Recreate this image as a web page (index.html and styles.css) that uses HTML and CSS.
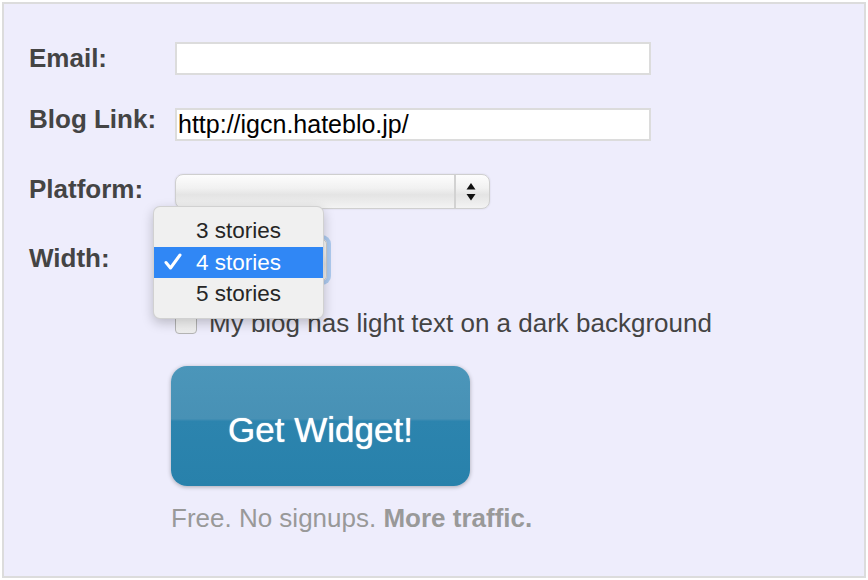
FILE: index.html
```html
<!DOCTYPE html>
<html lang="en">
<head>
    <meta charset="UTF-8">
    <title>Get Widget</title>
    <link rel="stylesheet" href="styles.css">
</head>
<body>
    <div class="panel">
        <form class="widget-form">
            <div class="row">
                <label class="field-label label-email" for="email">Email:</label>
                <input type="text" id="email" class="text-input">
            </div>

            <div class="row">
                <label class="field-label label-blog" for="blog">Blog Link:</label>
                <input type="text" id="blog" class="text-input" value="http://igcn.hateblo.jp/">
            </div>

            <div class="row">
                <label class="field-label label-platform">Platform:</label>
                <div class="select select-platform">
                    <span class="select-value"></span>
                    <span class="select-arrows">
                        <svg width="10" height="20" viewBox="0 0 10 20">
                            <polygon points="5,1 9.5,7.5 0.5,7.5" fill="#111"/>
                            <polygon points="0.5,12 9.5,12 5,18.5" fill="#111"/>
                        </svg>
                    </span>
                </div>
            </div>

            <div class="row row-width">
                <label class="field-label label-width">Width:</label>
                <div class="width-wrap">
                    <div class="select select-width"></div>
                    <ul class="menu">
                        <li class="menu-item">3 stories</li>
                        <li class="menu-item selected">
                            <svg class="tick" width="18" height="18" viewBox="0 0 18 18">
                                <polyline points="2,9.5 6.5,15 16,2" fill="none" stroke="#fff" stroke-width="3" stroke-linecap="round" stroke-linejoin="round"/>
                            </svg>
                            4 stories
                        </li>
                        <li class="menu-item">5 stories</li>
                    </ul>
                </div>
            </div>

            <div class="row row-check">
                <span class="checkbox"></span>
                <span class="check-label">My blog has light text on a dark background</span>
            </div>

            <button type="button" class="get-widget">Get Widget!</button>

            <p class="caption">Free. No signups. <b>More traffic.</b></p>
        </form>
    </div>
</body>
</html>
```

FILE: styles.css
```css
body {
    margin: 0;
    background-color: #fff;
    font-family: "Liberation Sans", Arial, sans-serif;
}

.panel {
    margin: 2px;
    width: 860px;
    height: 572px;
    border: 2px solid #dcdcdc;
    background-color: #eeedfc;
}

.widget-form {
    padding: 38px 0 0 25px;
}

.row {
    display: flex;
    align-items: flex-start;
    margin-bottom: 33px;
}

.field-label {
    width: 146px;
    flex-shrink: 0;
    font-size: 26px;
    line-height: 26px;
    font-weight: bold;
    color: #444;
}

.label-email { padding-top: 3px; }
.label-blog { margin-top: -2px; }
.label-platform { padding-top: 2px; }
.label-width { padding-top: 6px; }

.text-input {
    width: 476px;
    height: 33px;
    box-sizing: border-box;
    margin: 0;
    padding: 0 1px;
    border: 2px solid #dcdcdc;
    background-color: #fff;
    font-family: "Liberation Sans", Arial, sans-serif;
    font-size: 25px;
    color: #000;
    outline: none;
}

.select {
    box-sizing: border-box;
    border: 1px solid #cfcfcf;
    border-radius: 8px;
    background: linear-gradient(to bottom, #fdfdfd 0%, #f1f1f1 40%, #e4e4e4 60%, #f3f3f3 100%);
    box-shadow: 0 0 2px rgba(0, 0, 0, 0.12);
}

.select-platform {
    display: flex;
    width: 315px;
    height: 35px;
}

.select-value {
    flex: 1;
    border-right: 2px solid #d2d2d2;
}

.select-arrows {
    width: 33px;
    display: flex;
    align-items: center;
    justify-content: center;
}

.select-arrows svg {
    margin-right: 4px;
}

.row-width {
    margin-top: -3px;
    margin-bottom: 29px;
}

.width-wrap {
    position: relative;
}

.select-width {
    width: 152px;
    height: 42px;
    border-radius: 5px;
    box-shadow: 0 0 0 4px #aecbf0;
}

.menu {
    position: absolute;
    top: -33px;
    left: -22px;
    width: 171px;
    box-sizing: border-box;
    margin: 0;
    padding: 8px 0;
    list-style: none;
    background-color: #f0f0f0;
    border: 1px solid rgba(0, 0, 0, 0.13);
    border-radius: 7px;
    box-shadow: 0 4px 12px rgba(0, 0, 0, 0.22);
}

.menu-item {
    position: relative;
    height: 32px;
    padding-left: 42px;
    font-size: 22.5px;
    line-height: 32px;
    color: #262626;
}

.menu-item.selected {
    height: 31px;
    line-height: 31px;
    background-color: #3087f5;
    color: #fff;
}

.tick {
    position: absolute;
    left: 10px;
    top: 6px;
}

.row-check {
    align-items: center;
    margin-left: 146px;
    margin-bottom: 30px;
}

.checkbox {
    width: 22px;
    height: 22px;
    box-sizing: border-box;
    border: 1px solid #b4b4b4;
    border-radius: 4px;
    background: linear-gradient(to bottom, #fff, #ececec);
}

.check-label {
    margin-left: 12px;
    font-size: 26px;
    line-height: 26px;
    color: #444;
}

.get-widget {
    display: block;
    margin-left: 142px;
    width: 299px;
    height: 120px;
    padding: 7px 0 0;
    border: none;
    border-radius: 16px;
    background: linear-gradient(to bottom, #4b96ba 0%, #4891b5 44%, #2c84ae 46%, #2881ab 100%);
    box-shadow: 0 1px 4px rgba(0, 0, 0, 0.3);
    font-family: "Liberation Sans", Arial, sans-serif;
    font-size: 35px;
    color: #fff;
    text-shadow: 0 0 1px #fff;
    cursor: pointer;
}

.caption {
    margin: 19px 0 0 142px;
    font-size: 26px;
    line-height: 26px;
    color: #999;
}

.caption b {
    color: #999;
}
```
